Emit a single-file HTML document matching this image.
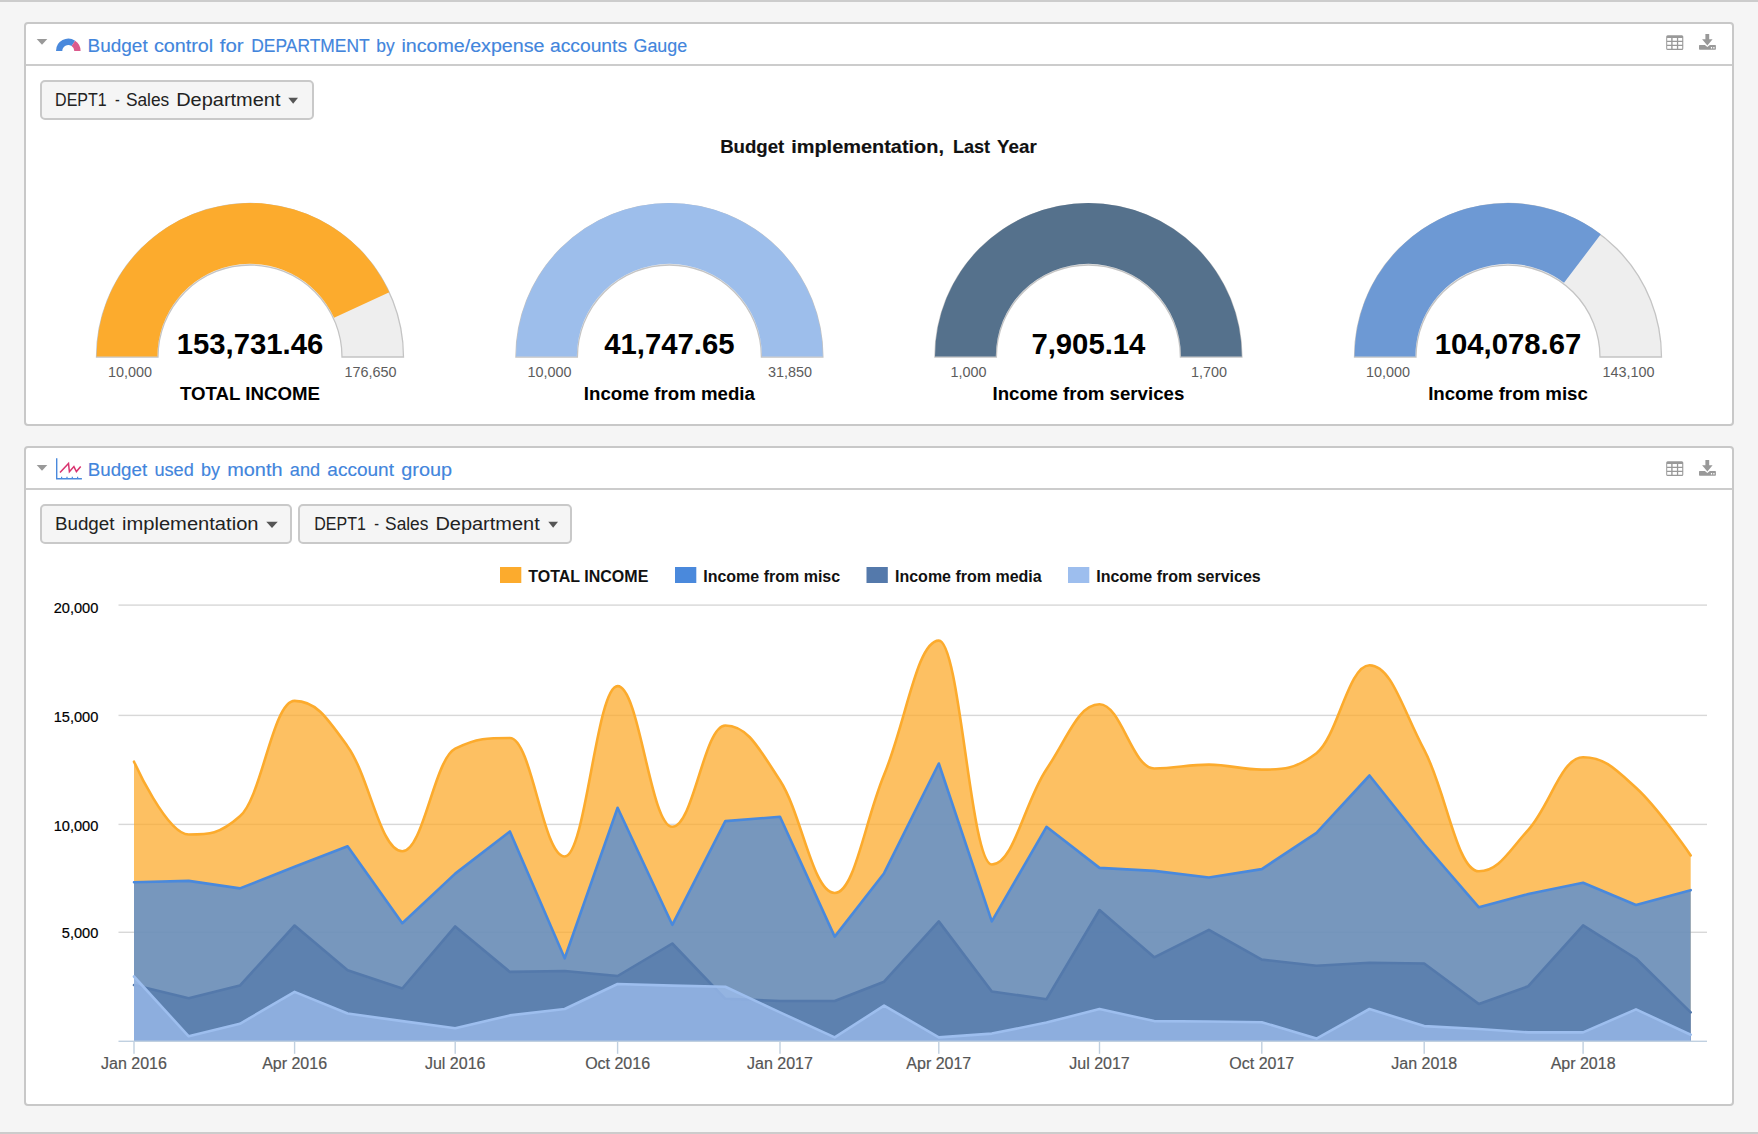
<!DOCTYPE html>
<html>
<head>
<meta charset="utf-8">
<title>Budget dashboard</title>
<style>
html,body{margin:0;padding:0;}
body{width:1758px;height:1134px;background:#f5f5f5;position:relative;overflow:hidden;font-family:"Liberation Sans",sans-serif;}
.strip{position:absolute;left:0;width:1758px;height:2px;background:#cccccc;}
.panel{position:absolute;left:24px;width:1710px;box-sizing:border-box;border:2px solid #c8c8c8;border-radius:4px;background:#ffffff;}
.sep{position:absolute;left:26px;width:1706px;height:2px;background:#cccccc;}
.title{position:absolute;left:87px;color:#4285dc;font-size:19px;line-height:24px;white-space:nowrap;letter-spacing:0.3px;}
.btn{position:absolute;box-sizing:border-box;height:40px;border:2px solid #c9c9c9;border-radius:5px;background:#f5f5f5;color:#222222;font-size:19px;line-height:36px;white-space:nowrap;}
.btn span{position:absolute;left:12.5px;top:0;}
.ctitle{position:absolute;left:40px;width:1677px;text-align:center;top:134px;font-size:18.6px;font-weight:bold;color:#111111;line-height:24px;white-space:nowrap;}
svg{position:absolute;left:0;top:0;}
svg text{font-family:"Liberation Sans",sans-serif;}
.gv{font-size:29.3px;font-weight:bold;fill:#000000;}
.gl{font-size:14.4px;fill:#5c5c5c;}
.gt{font-size:18.67px;font-weight:bold;fill:#000000;}
.xl{font-size:16px;fill:#555555;stroke:#555555;stroke-width:0.2px;}
.yl{font-size:14.6px;fill:#000000;stroke:#000;stroke-width:0.2px;}
.lg{font-size:16px;font-weight:bold;fill:#111111;}
</style>
</head>
<body>
<div class="strip" style="top:0"></div>
<div class="strip" style="top:1132px"></div>

<div class="panel" style="top:22px;height:404px"></div>
<div class="sep" style="top:64px"></div>
<div class="panel" style="top:446px;height:660px"></div>
<div class="sep" style="top:488px"></div>


<div class="btn" id="b1" style="left:40px;top:80px;width:274px"></div>
<div class="btn" id="b2" style="left:40px;top:504px;width:252px"></div>
<div class="btn" id="b3" style="left:298px;top:504px;width:274px"></div>


<svg width="1758" height="1134" viewBox="0 0 1758 1134">
<!-- header icons -->
<polygon points="36.7,39 47.3,39 42,44.8" fill="#999999"/>
<polygon points="36.7,464.9 47.3,464.9 42,470.7" fill="#999999"/>
<!-- gauge icon -->
<path d="M56 50.9 A12.3 12.3 0 0 1 75.13 40.74 L71.58 45.94 A6 6 0 0 0 62.3 50.9 Z" fill="#4a89dc"/>
<path d="M75.13 40.74 A12.3 12.3 0 0 1 80.6 50.9 L74.3 50.9 A6 6 0 0 0 71.58 45.94 Z" fill="#db5a8c"/>
<!-- line icon -->
<path d="M56.7 458.2 V478.8 H81.9" fill="none" stroke="#4a89dc" stroke-width="1.4"/>
<path d="M61.6 476.8 V478.8 M67 476.8 V478.8 M72.3 476.8 V478.8 M77.6 476.8 V478.8" fill="none" stroke="#4a89dc" stroke-width="1.2"/>
<path d="M60 472.5 L68.5 463.4 L69.4 471.8 L73.9 466.6 L76.4 471.6 L80.7 466.4" fill="none" stroke="#d9336f" stroke-width="1.5"/>
<!-- table + download icons -->
<g id="ico1">
<path fill-rule="evenodd" fill="#999999" d="M1667.7 35.2 H1681.8 A1.5 1.5 0 0 1 1683.3 36.7 V48.4 A1.5 1.5 0 0 1 1681.8 49.9 H1667.7 A1.5 1.5 0 0 1 1666.2 48.4 V36.7 A1.5 1.5 0 0 1 1667.7 35.2 Z M1667.2 38.1 H1671.2 V40.8 H1667.2 Z M1672.6 38.1 H1676.9 V40.8 H1672.6 Z M1678.2 38.1 H1682.2 V40.8 H1678.2 Z M1667.2 42.1 H1671.2 V44.8 H1667.2 Z M1672.6 42.1 H1676.9 V44.8 H1672.6 Z M1678.2 42.1 H1682.2 V44.8 H1678.2 Z M1667.2 46.1 H1671.2 V48.8 H1667.2 Z M1672.6 46.1 H1676.9 V48.8 H1672.6 Z M1678.2 46.1 H1682.2 V48.8 H1678.2 Z"/>
<path fill="#999999" d="M1705.4 34 H1709.2 V39.3 H1712.6 L1707.35 45.4 L1702.1 39.3 H1705.4 Z"/>
<path fill-rule="evenodd" fill="#999999" d="M1699 45.6 A0.7 0.7 0 0 1 1699.7 44.9 H1704.9 L1707.35 46.9 L1709.8 44.9 H1715.2 A0.7 0.7 0 0 1 1715.9 45.6 V49 A0.7 0.7 0 0 1 1715.2 49.7 H1699.7 A0.7 0.7 0 0 1 1699 49 Z M1710.9 47 H1712.1 V48.5 H1710.9 Z M1713.3 47 H1714.5 V48.5 H1713.3 Z"/>
</g>
<use href="#ico1" transform="translate(0,426)"/>
<!-- carets -->
<polygon points="288.3,97.8 298,97.8 293.15,103.8" fill="#555555"/>
<polygon points="266.3,521.8 277.7,521.8 272,527.9" fill="#555555"/>
<polygon points="548.3,521.8 558,521.8 553.15,527.7" fill="#555555"/>
<!-- gauges -->
<path d="M96.50 357.00 A153.5 153.5 0 0 1 403.50 357.00 L342.00 357.00 A92.0 92.0 0 0 0 158.00 357.00 Z" fill="#eeeeee" stroke="#c4c4c4" stroke-width="1.3"/>
<path d="M96.60 356.45 A153.4 153.4 0 0 1 389.30 292.22 L334.09 317.68 A92.6 92.6 0 0 0 157.40 356.45 Z" fill="#fcab2d"/>
<text x="250.0" y="354.4" class="gv" text-anchor="middle">153,731.46</text>
<text x="130.0" y="377.2" class="gl" text-anchor="middle">10,000</text>
<text x="370.5" y="377.2" class="gl" text-anchor="middle">176,650</text>
<text x="250.0" y="399.6" class="gt" text-anchor="middle">TOTAL INCOME</text>
<path d="M515.90 357.00 A153.5 153.5 0 0 1 822.90 357.00 L761.40 357.00 A92.0 92.0 0 0 0 577.40 357.00 Z" fill="#eeeeee" stroke="#c4c4c4" stroke-width="1.3"/>
<path d="M516.00 356.45 A153.4 153.4 0 0 1 822.80 356.45 L762.00 356.45 A92.6 92.6 0 0 0 576.80 356.45 Z" fill="#9dbeeb"/>
<text x="669.4" y="354.4" class="gv" text-anchor="middle">41,747.65</text>
<text x="549.4" y="377.2" class="gl" text-anchor="middle">10,000</text>
<text x="789.9" y="377.2" class="gl" text-anchor="middle">31,850</text>
<text x="669.4" y="399.6" class="gt" text-anchor="middle">Income from media</text>
<path d="M934.90 357.00 A153.5 153.5 0 0 1 1241.90 357.00 L1180.40 357.00 A92.0 92.0 0 0 0 996.40 357.00 Z" fill="#eeeeee" stroke="#c4c4c4" stroke-width="1.3"/>
<path d="M935.00 356.45 A153.4 153.4 0 0 1 1241.80 356.45 L1181.00 356.45 A92.6 92.6 0 0 0 995.80 356.45 Z" fill="#55718c"/>
<text x="1088.4" y="354.4" class="gv" text-anchor="middle">7,905.14</text>
<text x="968.4000000000001" y="377.2" class="gl" text-anchor="middle">1,000</text>
<text x="1208.9" y="377.2" class="gl" text-anchor="middle">1,700</text>
<text x="1088.4" y="399.6" class="gt" text-anchor="middle">Income from services</text>
<path d="M1354.50 357.00 A153.5 153.5 0 0 1 1661.50 357.00 L1600.00 357.00 A92.0 92.0 0 0 0 1416.00 357.00 Z" fill="#eeeeee" stroke="#c4c4c4" stroke-width="1.3"/>
<path d="M1354.60 356.45 A153.4 153.4 0 0 1 1600.81 234.31 L1564.02 282.72 A92.6 92.6 0 0 0 1415.40 356.45 Z" fill="#6d99d4"/>
<text x="1508.0" y="354.4" class="gv" text-anchor="middle">104,078.67</text>
<text x="1388.0" y="377.2" class="gl" text-anchor="middle">10,000</text>
<text x="1628.5" y="377.2" class="gl" text-anchor="middle">143,100</text>
<text x="1508.0" y="399.6" class="gt" text-anchor="middle">Income from misc</text>

<!-- words -->
<text x="87.50" y="51.7" textLength="60.19" lengthAdjust="spacingAndGlyphs" font-size="18.9" fill="#4285dc" stroke="#4285dc" stroke-width="0.15">Budget</text>
<text x="153.90" y="51.7" textLength="59.33" lengthAdjust="spacingAndGlyphs" font-size="18.9" fill="#4285dc" stroke="#4285dc" stroke-width="0.15">control</text>
<text x="219.80" y="51.7" textLength="23.84" lengthAdjust="spacingAndGlyphs" font-size="18.9" fill="#4285dc" stroke="#4285dc" stroke-width="0.15">for</text>
<text x="251.30" y="51.7" textLength="118.34" lengthAdjust="spacingAndGlyphs" font-size="18.9" fill="#4285dc" stroke="#4285dc" stroke-width="0.15">DEPARTMENT</text>
<text x="376.30" y="51.7" textLength="18.42" lengthAdjust="spacingAndGlyphs" font-size="18.9" fill="#4285dc" stroke="#4285dc" stroke-width="0.15">by</text>
<text x="401.40" y="51.7" textLength="143.05" lengthAdjust="spacingAndGlyphs" font-size="18.9" fill="#4285dc" stroke="#4285dc" stroke-width="0.15">income/expense</text>
<text x="550.00" y="51.7" textLength="77.05" lengthAdjust="spacingAndGlyphs" font-size="18.9" fill="#4285dc" stroke="#4285dc" stroke-width="0.15">accounts</text>
<text x="633.50" y="51.7" textLength="53.66" lengthAdjust="spacingAndGlyphs" font-size="18.9" fill="#4285dc" stroke="#4285dc" stroke-width="0.15">Gauge</text>
<text x="87.70" y="475.9" textLength="59.49" lengthAdjust="spacingAndGlyphs" font-size="18.9" fill="#4285dc" stroke="#4285dc" stroke-width="0.15">Budget</text>
<text x="154.40" y="475.9" textLength="39.37" lengthAdjust="spacingAndGlyphs" font-size="18.9" fill="#4285dc" stroke="#4285dc" stroke-width="0.15">used</text>
<text x="201.00" y="475.9" textLength="19.02" lengthAdjust="spacingAndGlyphs" font-size="18.9" fill="#4285dc" stroke="#4285dc" stroke-width="0.15">by</text>
<text x="227.20" y="475.9" textLength="55.29" lengthAdjust="spacingAndGlyphs" font-size="18.9" fill="#4285dc" stroke="#4285dc" stroke-width="0.15">month</text>
<text x="289.80" y="475.9" textLength="30.27" lengthAdjust="spacingAndGlyphs" font-size="18.9" fill="#4285dc" stroke="#4285dc" stroke-width="0.15">and</text>
<text x="327.30" y="475.9" textLength="66.65" lengthAdjust="spacingAndGlyphs" font-size="18.9" fill="#4285dc" stroke="#4285dc" stroke-width="0.15">account</text>
<text x="401.30" y="475.9" textLength="50.76" lengthAdjust="spacingAndGlyphs" font-size="18.9" fill="#4285dc" stroke="#4285dc" stroke-width="0.15">group</text>
<text x="55.10" y="105.8" textLength="51.57" lengthAdjust="spacingAndGlyphs" font-size="18.9" fill="#222222" stroke="#222222" stroke-width="0.0">DEPT1</text>
<text x="115.00" y="105.8" textLength="4.77" lengthAdjust="spacingAndGlyphs" font-size="18.9" fill="#222222" stroke="#222222" stroke-width="0.0">-</text>
<text x="125.90" y="105.8" textLength="43.33" lengthAdjust="spacingAndGlyphs" font-size="18.9" fill="#222222" stroke="#222222" stroke-width="0.0">Sales</text>
<text x="176.20" y="105.8" textLength="104.30" lengthAdjust="spacingAndGlyphs" font-size="18.9" fill="#222222" stroke="#222222" stroke-width="0.0">Department</text>
<text x="54.90" y="529.8" textLength="59.59" lengthAdjust="spacingAndGlyphs" font-size="18.9" fill="#222222" stroke="#222222" stroke-width="0.0">Budget</text>
<text x="122.00" y="529.8" textLength="136.53" lengthAdjust="spacingAndGlyphs" font-size="18.9" fill="#222222" stroke="#222222" stroke-width="0.0">implementation</text>
<text x="314.30" y="529.8" textLength="51.57" lengthAdjust="spacingAndGlyphs" font-size="18.9" fill="#222222" stroke="#222222" stroke-width="0.0">DEPT1</text>
<text x="374.20" y="529.8" textLength="4.77" lengthAdjust="spacingAndGlyphs" font-size="18.9" fill="#222222" stroke="#222222" stroke-width="0.0">-</text>
<text x="385.10" y="529.8" textLength="43.33" lengthAdjust="spacingAndGlyphs" font-size="18.9" fill="#222222" stroke="#222222" stroke-width="0.0">Sales</text>
<text x="435.40" y="529.8" textLength="104.30" lengthAdjust="spacingAndGlyphs" font-size="18.9" fill="#222222" stroke="#222222" stroke-width="0.0">Department</text>
<text x="720.20" y="153.3" textLength="64.08" lengthAdjust="spacingAndGlyphs" font-size="18.4" font-weight="bold" fill="#111111" stroke="#111111" stroke-width="0.15">Budget</text>
<text x="791.20" y="153.3" textLength="152.75" lengthAdjust="spacingAndGlyphs" font-size="18.4" font-weight="bold" fill="#111111" stroke="#111111" stroke-width="0.15">implementation,</text>
<text x="953.00" y="153.3" textLength="37.12" lengthAdjust="spacingAndGlyphs" font-size="18.4" font-weight="bold" fill="#111111" stroke="#111111" stroke-width="0.15">Last</text>
<text x="997.10" y="153.3" textLength="39.67" lengthAdjust="spacingAndGlyphs" font-size="18.4" font-weight="bold" fill="#111111" stroke="#111111" stroke-width="0.15">Year</text>

<!-- chart -->
<rect x="118.5" y="604.4" width="1588.5" height="1.4" fill="#d8d8d8"/>
<rect x="118.5" y="714.7" width="1588.5" height="1.4" fill="#d8d8d8"/>
<rect x="118.5" y="823.7" width="1588.5" height="1.4" fill="#d8d8d8"/>
<rect x="118.5" y="931.6" width="1588.5" height="1.4" fill="#d8d8d8"/>
<path d="M134 761.7 C134 761.7 166.8 834.5 188.7 834.5 C209.2 834.5 219.4 834.5 239.9 816.3 C261.8 798.1 272.7 700.9 294.6 700.9 C315.8 700.9 326.4 716.8 347.6 746.4 C369.5 777 380.4 851.3 402.3 851.3 C423.5 851.3 434.1 759.4 455.2 748.7 C477.1 738 488.1 738 509.9 738 C531.8 738 542.8 856.5 564.7 856.5 C585.8 856.5 596.4 686.1 617.6 686.1 C639.5 686.1 650.4 826.8 672.3 826.8 C693.5 826.8 704.1 725.5 725.3 725.5 C747.2 725.5 758.1 747 780 780.5 C801.9 814 812.8 893 834.7 893 C854.5 893 864.4 822.7 884.1 774.8 C906 721.8 917 640.6 938.8 640.6 C960 640.6 970.6 864.5 991.8 864.5 C1013.7 864.5 1024.6 801.8 1046.5 769.2 C1067.7 737.7 1078.3 704.3 1099.5 704.3 C1121.3 704.3 1132.3 768.5 1154.2 768.5 C1176.1 768.5 1187 764.6 1208.9 764.6 C1230.1 764.6 1240.7 769.6 1261.8 769.6 C1283.7 769.6 1294.7 769.6 1316.5 753.2 C1337.7 736.8 1348.3 665.2 1369.5 665.2 C1391.4 665.2 1402.3 708.6 1424.2 749.8 C1446.1 791 1457 871.3 1478.9 871.3 C1498.7 871.3 1508.6 851.4 1528.3 829.8 C1550.2 805.8 1561.2 757.3 1583.1 757.3 C1604.2 757.3 1614.8 768.5 1636 787.8 C1657.9 807.7 1690.7 855.4 1690.7 855.4 L1690.7 1041.3 L134 1041.3 Z" fill="#fcab2d" fill-opacity="0.75"/>
<path d="M134 761.7 C134 761.7 166.8 834.5 188.7 834.5 C209.2 834.5 219.4 834.5 239.9 816.3 C261.8 798.1 272.7 700.9 294.6 700.9 C315.8 700.9 326.4 716.8 347.6 746.4 C369.5 777 380.4 851.3 402.3 851.3 C423.5 851.3 434.1 759.4 455.2 748.7 C477.1 738 488.1 738 509.9 738 C531.8 738 542.8 856.5 564.7 856.5 C585.8 856.5 596.4 686.1 617.6 686.1 C639.5 686.1 650.4 826.8 672.3 826.8 C693.5 826.8 704.1 725.5 725.3 725.5 C747.2 725.5 758.1 747 780 780.5 C801.9 814 812.8 893 834.7 893 C854.5 893 864.4 822.7 884.1 774.8 C906 721.8 917 640.6 938.8 640.6 C960 640.6 970.6 864.5 991.8 864.5 C1013.7 864.5 1024.6 801.8 1046.5 769.2 C1067.7 737.7 1078.3 704.3 1099.5 704.3 C1121.3 704.3 1132.3 768.5 1154.2 768.5 C1176.1 768.5 1187 764.6 1208.9 764.6 C1230.1 764.6 1240.7 769.6 1261.8 769.6 C1283.7 769.6 1294.7 769.6 1316.5 753.2 C1337.7 736.8 1348.3 665.2 1369.5 665.2 C1391.4 665.2 1402.3 708.6 1424.2 749.8 C1446.1 791 1457 871.3 1478.9 871.3 C1498.7 871.3 1508.6 851.4 1528.3 829.8 C1550.2 805.8 1561.2 757.3 1583.1 757.3 C1604.2 757.3 1614.8 768.5 1636 787.8 C1657.9 807.7 1690.7 855.4 1690.7 855.4" fill="none" stroke="#fcab2d" stroke-width="2.6" stroke-linejoin="round" stroke-linecap="round"/>
<path d="M134 882.3 L188.7 880.9 L239.9 888.4 L294.6 866.8 L347.6 846.3 L402.3 923.2 L455.2 873.6 L509.9 831.5 L564.7 958.3 L617.6 807.8 L672.3 924.8 L725.3 821.1 L780 816.8 L834.7 936.6 L884.1 873.2 L938.8 763.5 L991.8 921.4 L1046.5 826.8 L1099.5 867.9 L1154.2 870.9 L1208.9 877.5 L1261.8 869.1 L1316.5 832.8 L1369.5 775.5 L1424.2 844 L1478.9 907.3 L1528.3 894.1 L1583.1 882.7 L1636 905 L1690.7 890.2 L1690.7 1041.3 L134 1041.3 Z" fill="#4a89dc" fill-opacity="0.75"/>
<path d="M134 882.3 L188.7 880.9 L239.9 888.4 L294.6 866.8 L347.6 846.3 L402.3 923.2 L455.2 873.6 L509.9 831.5 L564.7 958.3 L617.6 807.8 L672.3 924.8 L725.3 821.1 L780 816.8 L834.7 936.6 L884.1 873.2 L938.8 763.5 L991.8 921.4 L1046.5 826.8 L1099.5 867.9 L1154.2 870.9 L1208.9 877.5 L1261.8 869.1 L1316.5 832.8 L1369.5 775.5 L1424.2 844 L1478.9 907.3 L1528.3 894.1 L1583.1 882.7 L1636 905 L1690.7 890.2" fill="none" stroke="#4a89dc" stroke-width="2.6" stroke-linejoin="round" stroke-linecap="round"/>
<path d="M134 985.1 L188.7 998.3 L239.9 985.6 L294.6 925.5 L347.6 970.3 L402.3 988.5 L455.2 926.4 L509.9 971.9 L564.7 971 L617.6 976 L672.3 943.5 L725.3 998.8 L780 1001 L834.7 1001 L884.1 981.7 L938.8 921.4 L991.8 991.5 L1046.5 999.2 L1099.5 910 L1154.2 957.3 L1208.9 929.8 L1261.8 959.6 L1316.5 965.8 L1369.5 962.8 L1424.2 963.5 L1478.9 1004 L1528.3 986.2 L1583.1 925.3 L1636 958.5 L1690.7 1012.4 L1690.7 1041.3 L134 1041.3 Z" fill="#5479ab" fill-opacity="0.75"/>
<path d="M134 985.1 L188.7 998.3 L239.9 985.6 L294.6 925.5 L347.6 970.3 L402.3 988.5 L455.2 926.4 L509.9 971.9 L564.7 971 L617.6 976 L672.3 943.5 L725.3 998.8 L780 1001 L834.7 1001 L884.1 981.7 L938.8 921.4 L991.8 991.5 L1046.5 999.2 L1099.5 910 L1154.2 957.3 L1208.9 929.8 L1261.8 959.6 L1316.5 965.8 L1369.5 962.8 L1424.2 963.5 L1478.9 1004 L1528.3 986.2 L1583.1 925.3 L1636 958.5 L1690.7 1012.4" fill="none" stroke="#5479ab" stroke-width="2.6" stroke-linejoin="round" stroke-linecap="round"/>
<path d="M134 976.5 L188.7 1036.3 L239.9 1023.8 L294.6 991.9 L347.6 1013.5 L402.3 1021.1 L455.2 1028.3 L509.9 1015.4 L564.7 1009 L617.6 984 L672.3 985.6 L725.3 986.7 L780 1012.4 L834.7 1037.4 L884.1 1005.6 L938.8 1037.4 L991.8 1033.6 L1046.5 1022.6 L1099.5 1009 L1154.2 1021.1 L1208.9 1021.5 L1261.8 1022.2 L1316.5 1038.6 L1369.5 1009 L1424.2 1026.1 L1478.9 1029 L1528.3 1032.4 L1583.1 1032.4 L1636 1009.4 L1690.7 1034.7 L1690.7 1041.3 L134 1041.3 Z" fill="#9dbeee" fill-opacity="0.75"/>
<path d="M134 976.5 L188.7 1036.3 L239.9 1023.8 L294.6 991.9 L347.6 1013.5 L402.3 1021.1 L455.2 1028.3 L509.9 1015.4 L564.7 1009 L617.6 984 L672.3 985.6 L725.3 986.7 L780 1012.4 L834.7 1037.4 L884.1 1005.6 L938.8 1037.4 L991.8 1033.6 L1046.5 1022.6 L1099.5 1009 L1154.2 1021.1 L1208.9 1021.5 L1261.8 1022.2 L1316.5 1038.6 L1369.5 1009 L1424.2 1026.1 L1478.9 1029 L1528.3 1032.4 L1583.1 1032.4 L1636 1009.4 L1690.7 1034.7" fill="none" stroke="#9dbeee" stroke-width="2.6" stroke-linejoin="round" stroke-linecap="round"/>
<rect x="118.5" y="1040.6" width="1588.5" height="1.4" fill="#c0d0e0"/>
<rect x="133.3" y="1041.5" width="1.4" height="12.3" fill="#c0d0e0"/>
<text x="134" y="1068.7" class="xl" text-anchor="middle">Jan 2016</text>
<rect x="293.9" y="1041.5" width="1.4" height="12.3" fill="#c0d0e0"/>
<text x="294.6" y="1068.7" class="xl" text-anchor="middle">Apr 2016</text>
<rect x="454.5" y="1041.5" width="1.4" height="12.3" fill="#c0d0e0"/>
<text x="455.2" y="1068.7" class="xl" text-anchor="middle">Jul 2016</text>
<rect x="616.9" y="1041.5" width="1.4" height="12.3" fill="#c0d0e0"/>
<text x="617.6" y="1068.7" class="xl" text-anchor="middle">Oct 2016</text>
<rect x="779.3" y="1041.5" width="1.4" height="12.3" fill="#c0d0e0"/>
<text x="780" y="1068.7" class="xl" text-anchor="middle">Jan 2017</text>
<rect x="938.1" y="1041.5" width="1.4" height="12.3" fill="#c0d0e0"/>
<text x="938.8" y="1068.7" class="xl" text-anchor="middle">Apr 2017</text>
<rect x="1098.8" y="1041.5" width="1.4" height="12.3" fill="#c0d0e0"/>
<text x="1099.5" y="1068.7" class="xl" text-anchor="middle">Jul 2017</text>
<rect x="1261.1" y="1041.5" width="1.4" height="12.3" fill="#c0d0e0"/>
<text x="1261.8" y="1068.7" class="xl" text-anchor="middle">Oct 2017</text>
<rect x="1423.5" y="1041.5" width="1.4" height="12.3" fill="#c0d0e0"/>
<text x="1424.2" y="1068.7" class="xl" text-anchor="middle">Jan 2018</text>
<rect x="1582.4" y="1041.5" width="1.4" height="12.3" fill="#c0d0e0"/>
<text x="1583.1" y="1068.7" class="xl" text-anchor="middle">Apr 2018</text>
<text x="98.3" y="612.6" class="yl" text-anchor="end">20,000</text>
<text x="98.3" y="721.7" class="yl" text-anchor="end">15,000</text>
<text x="98.3" y="831" class="yl" text-anchor="end">10,000</text>
<text x="98.3" y="937.7" class="yl" text-anchor="end">5,000</text>
<rect x="500" y="567" width="21.3" height="16" fill="#fcab2d"/>
<text x="528.3" y="581.6" class="lg">TOTAL INCOME</text>
<rect x="675" y="567" width="21.3" height="16" fill="#4a89dc"/>
<text x="703.2" y="581.6" class="lg">Income from misc</text>
<rect x="866.5" y="567" width="21.3" height="16" fill="#5479ab"/>
<text x="895" y="581.6" class="lg">Income from media</text>
<rect x="1068" y="567" width="21.3" height="16" fill="#9dbeee"/>
<text x="1096.2" y="581.6" class="lg">Income from services</text>

</svg>
</body>
</html>
